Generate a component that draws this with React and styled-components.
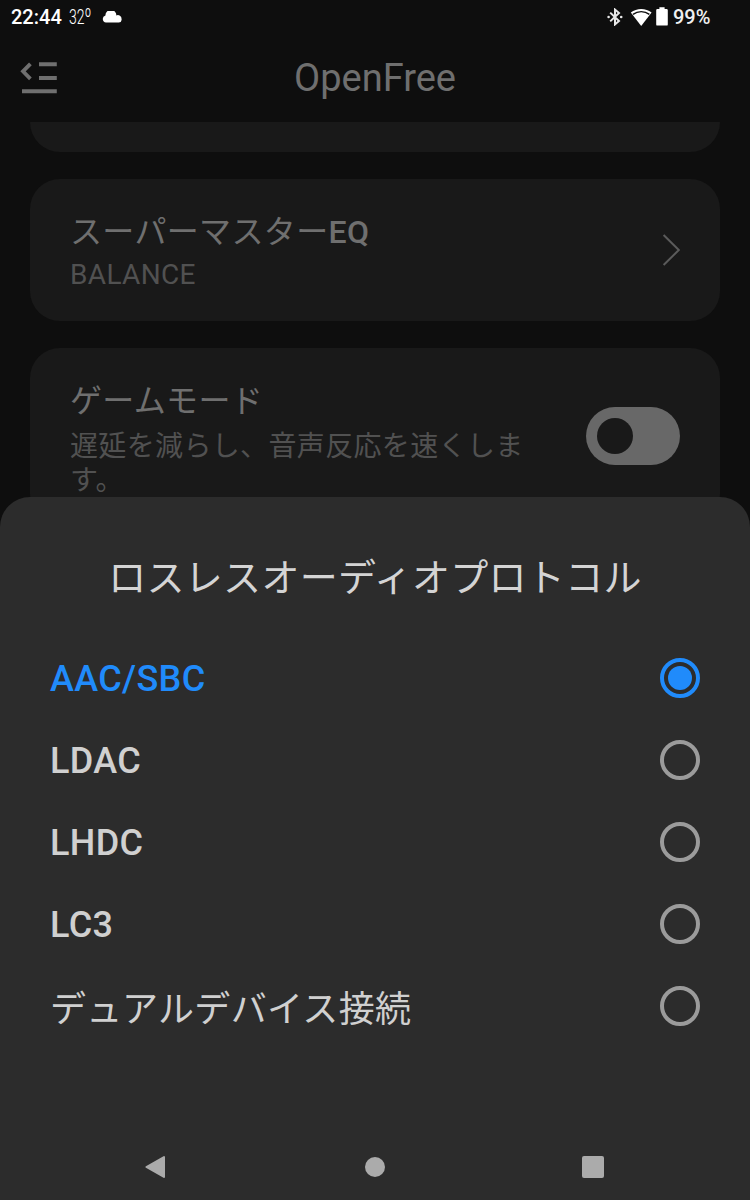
import React, { useState } from 'react';
import styled, { createGlobalStyle, css } from 'styled-components';

const protocols = [
  { name: 'AAC/SBC' },
  { name: 'LDAC' },
  { name: 'LHDC' },
  { name: 'LC3' },
  { name: 'デュアルデバイス接続', japanese: true },
];

const App = () => {
  const [selected, setSelected] = useState('AAC/SBC');
  const [gameMode, setGameMode] = useState(false);

  return (
    <>
      <GlobalStyle />
      <Screen>
        <StatusBar>
          <Clock>22:44</Clock>
          <Temperature>32<Degree>º</Degree></Temperature>
          <CloudIcon />
          <StatusRight>
            <BluetoothIcon />
            <WifiIcon />
            <BatteryIcon />
            <Percent>99%</Percent>
          </StatusRight>
        </StatusBar>

        <Header>
          <MenuIcon />
          <AppTitle>OpenFree</AppTitle>
        </Header>

        <CardList>
          <CardEnd />
          <Card>
            <CardText>
              <CardTitle>スーパーマスター<Latin>EQ</Latin></CardTitle>
              <CardSub>BALANCE</CardSub>
            </CardText>
            <ChevronIcon />
          </Card>
          <Card $tall>
            <CardText $tall>
              <CardTitle>ゲームモード</CardTitle>
              <CardSub $japanese>遅延を減らし、音声反応を速くします。</CardSub>
            </CardText>
            <Toggle
              role="switch"
              aria-checked={gameMode}
              $on={gameMode}
              onClick={() => setGameMode(!gameMode)}
            />
          </Card>
        </CardList>

        <Sheet>
          <SheetTitle>ロスレスオーディオプロトコル</SheetTitle>
          <Options>
            {protocols.map(({ name, japanese }) => {
              const active = name === selected;
              return (
                <Option key={name} $active={active} onClick={() => setSelected(name)}>
                  <OptionLabel $japanese={japanese}>{name}</OptionLabel>
                  <Radio $active={active} />
                </Option>
              );
            })}
          </Options>
          <NavBar>
            <svg width="22" height="24" viewBox="0 0 22 24">
              <path d="M1.4 12 L19 2 V22 Z" fill="#ababab" stroke="#ababab" strokeWidth="2" strokeLinejoin="round" />
            </svg>
            <HomeDot />
            <RecentSquare />
          </NavBar>
        </Sheet>
      </Screen>
    </>
  );
};

const CloudIcon = () => (
  <Cloud width="20" height="12" viewBox="0 0 20 12">
    <path d="M4 11.6 A3.7 3.7 0 0 1 3.4 4.4 A5.4 5.4 0 0 1 14.4 4.4 A3.8 3.8 0 0 1 19.6 8 V9 A3 3 0 0 1 16.8 11.6 Z" fill="#fff" />
  </Cloud>
);

const BluetoothIcon = () => (
  <svg width="16" height="18" viewBox="0 0 16 18">
    <path d="M3.2 4.6 L12 13 L8 16.4 V1.6 L12 5 L3.2 13.4" fill="none" stroke="#e8e8e8" strokeWidth="2" />
    <circle cx="1.6" cy="9" r="1.3" fill="#e8e8e8" />
    <circle cx="14.2" cy="9" r="1.3" fill="#e8e8e8" />
  </svg>
);

const WifiIcon = () => (
  <Wifi width="22" height="18" viewBox="0 0 22 18">
    <path d="M11.2 18 L0.8 4.6 A16.6 16.6 0 0 1 21.6 4.6 Z" fill="#fff" />
    <path d="M3 6.4 A13.5 13.5 0 0 1 19.4 6.4" fill="none" stroke="#0e0e0e" strokeWidth="1.4" />
  </Wifi>
);

const BatteryIcon = () => (
  <Battery width="12" height="19" viewBox="0 0 12 19">
    <path d="M3.4 0.2 H8.6 V2 H10.6 Q11.8 2 11.8 3.2 V17.4 Q11.8 18.6 10.6 18.6 H1.4 Q0.2 18.6 0.2 17.4 V3.2 Q0.2 2 1.4 2 H3.4 Z" fill="#fff" />
  </Battery>
);

const MenuIcon = () => (
  <svg width="37" height="32" viewBox="0 0 37 32">
    <path d="M10.4 1.8 L3 9.3 L10.4 16.8" fill="none" stroke="#6f6f6f" strokeWidth="3.8" />
    <path d="M19 2.2 H36.8 M19 16 H36.8 M2 29.2 H36.8" stroke="#6f6f6f" strokeWidth="4" />
  </svg>
);

const ChevronIcon = () => (
  <svg width="18" height="32" viewBox="0 0 18 32">
    <path d="M1.6 1 L16.8 16 L1.6 31" fill="none" stroke="#5b5b5b" strokeWidth="2" />
  </svg>
);

const GlobalStyle = createGlobalStyle`
  * {
    box-sizing: border-box;
  }

  body {
    margin: 0;
    background-color: #0e0e0e;
    font-family: Roboto, "Noto Sans CJK JP", sans-serif;
  }

  svg {
    display: block;
    flex: none;
  }
`;

const Screen = styled.div`
  position: relative;
  display: flex;
  flex-direction: column;
  width: 750px;
  height: 1200px;
  overflow: hidden;
  background-color: #0e0e0e;
`;

const StatusBar = styled.div`
  display: flex;
  align-items: center;
  height: 34px;
  padding: 0 40px 0 11px;
  color: #fff;
`;

const Clock = styled.span`
  width: 51px;
  margin-right: 7px;
  font-size: 20px;
  font-weight: 500;
`;

const Temperature = styled.span`
  display: flex;
  width: 33px;
  font-size: 20px;
  font-weight: 300;
  transform: scaleX(0.7);
  transform-origin: left center;
`;

const Degree = styled.span`
  margin-top: 1px;
  font-size: 22px;
  line-height: 22px;
`;

const Cloud = styled.svg`
  margin-top: -1px;
`;

const StatusRight = styled.div`
  display: flex;
  align-items: center;
  margin-left: auto;
`;

const Wifi = styled.svg`
  margin-left: 7px;
`;

const Battery = styled.svg`
  margin: -1px 5px 0 4px;
`;

const Percent = styled.span`
  width: 37px;
  color: #f0f0f0;
  font-size: 20px;
  font-weight: 500;
`;

const Header = styled.header`
  display: grid;
  grid-template-columns: 80px 1fr 80px;
  align-items: center;
  height: 88px;
  padding-left: 20px;
  padding-right: 20px;
`;

const AppTitle = styled.h1`
  margin: 0;
  color: #6f6f6f;
  font-size: 38px;
  font-weight: 400;
  text-align: center;
`;

const CardList = styled.main`
  flex: 1;
  display: flex;
  flex-direction: column;
  gap: 27px;
  padding: 0 30px;
  overflow: hidden;
`;

const CardEnd = styled.div`
  flex: none;
  height: 60px;
  margin-top: -30px;
  border-radius: 30px;
  background-color: #191919;
`;

const Card = styled.section`
  flex: none;
  display: flex;
  align-items: center;
  justify-content: space-between;
  height: ${({ $tall }) => ($tall ? '176px' : '142px')};
  padding: 0 40px;
  border-radius: 30px;
  background-color: #191919;
`;

const CardText = styled.div`
  width: 462px;
  margin-top: ${({ $tall }) => ($tall ? '4px' : '1px')};
`;

const CardTitle = styled.h2`
  margin: 0;
  color: #6f6f6f;
  font-size: 32px;
  font-weight: 400;
  line-height: 46px;
  letter-spacing: 0.35px;
`;

const Latin = styled.span`
  font-weight: 500;
`;

const CardSub = styled.p`
  margin: ${({ $japanese }) => ($japanese ? '6px' : '3px')} 0 0;
  color: #515151;
  font-size: 28px;
  line-height: 34px;
  letter-spacing: 0.35px;
`;

const Toggle = styled.button`
  display: flex;
  align-items: center;
  justify-content: ${({ $on }) => ($on ? 'flex-end' : 'flex-start')};
  width: 94px;
  height: 58px;
  padding: 0 11px;
  border: 0;
  border-radius: 29px;
  background-color: #686868;

  &::after {
    content: "";
    width: 36px;
    height: 36px;
    border-radius: 50%;
    background-color: #191919;
  }
`;

const Sheet = styled.div`
  position: absolute;
  left: 0;
  right: 0;
  bottom: 0;
  display: flex;
  flex-direction: column;
  height: 703px;
  border-radius: 30px 30px 0 0;
  background-color: #2c2c2c;
`;

const SheetTitle = styled.h2`
  margin: 53px 0 0;
  color: #d4d4d4;
  font-size: 38px;
  font-weight: 400;
  line-height: 56px;
  letter-spacing: 0.3px;
  text-align: center;
`;

const Options = styled.div`
  display: flex;
  flex-direction: column;
  margin-top: 31px;
  padding: 0 50px;
`;

const Option = styled.div`
  display: flex;
  align-items: center;
  justify-content: space-between;
  height: 82px;
  color: ${({ $active }) => ($active ? '#208bfb' : '#d0d0d0')};
  cursor: pointer;
`;

const OptionLabel = styled.span`
  padding-top: ${({ $japanese }) => ($japanese ? '8px' : '2px')};
  font-size: 36px;
  font-weight: ${({ $japanese }) => ($japanese ? 400 : 500)};
  line-height: 52px;
  letter-spacing: 0.35px;
`;

const Radio = styled.span`
  display: flex;
  align-items: center;
  justify-content: center;
  width: 40px;
  height: 40px;
  border: 4px solid #9b9b9b;
  border-radius: 50%;

  ${({ $active }) =>
    $active &&
    css`
      border-color: #208bfb;

      &::after {
        content: "";
        width: 24px;
        height: 24px;
        border-radius: 50%;
        background-color: #208bfb;
      }
    `}
`;

const NavBar = styled.nav`
  display: flex;
  align-items: center;
  justify-content: space-between;
  height: 67px;
  margin-top: auto;
  padding: 0 146px 0 145px;
`;

const HomeDot = styled.span`
  width: 20px;
  height: 20px;
  border-radius: 50%;
  background-color: #ababab;
`;

const RecentSquare = styled.span`
  width: 22px;
  height: 22px;
  border-radius: 2px;
  background-color: #ababab;
`;

export default App;
